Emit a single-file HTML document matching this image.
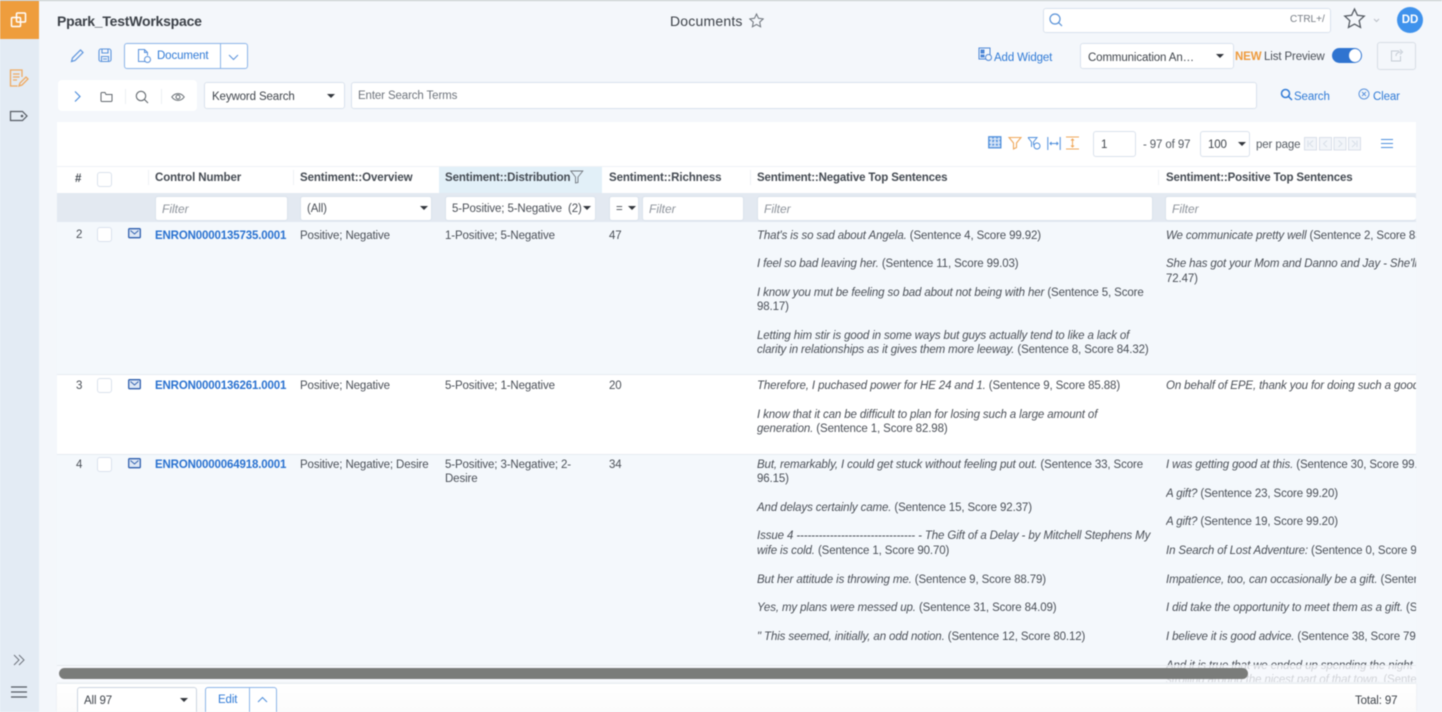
<!DOCTYPE html>
<html><head><meta charset="utf-8"><title>Documents</title>
<style>
html,body{margin:0;padding:0;width:1442px;height:712px;overflow:hidden;background:#f4f7fb}
body{font-family:"Liberation Sans",sans-serif;color:#4a4f57;font-size:11.5px;letter-spacing:-.12px;position:relative}
#r{position:absolute;left:0;top:0;width:1442px;height:712px;overflow:hidden;filter:blur(.4px)}
.a,.t,svg{position:absolute}
.t{white-space:nowrap;line-height:14px;margin-top:1px}
.h{font-weight:bold;font-size:11.5px;color:#444a52;letter-spacing:-.1px;margin-top:0}
.l{font-weight:bold;color:#2a72d0;font-size:11.5px;letter-spacing:-.15px;margin-top:0}
.i{font-style:italic}
.b{background:#fff;border:1px solid #dae2ec;border-radius:3px;box-sizing:border-box}
.f{font-style:italic;color:#8d939b;font-size:12px;letter-spacing:0;margin-top:0}
.tri{position:absolute;width:0;height:0;border-left:4px solid transparent;border-right:4px solid transparent;border-top:4.5px solid #33373d}
.cb{position:absolute;width:15px;height:15px;background:#fff;border:1px solid #dae2ec;border-radius:3px;box-sizing:border-box}
.blue{color:#2f7ad6}
</style></head><body><div id="r">
<div class="a" style="left:0;top:0;width:1442px;height:1px;background:#c4c8c9"></div>
<div class="a" style="left:0;top:1px;width:39px;height:711px;background:#e3ebf4"></div>
<div class="a" style="left:0;top:1px;width:39px;height:38px;background:#ee9d3d"></div>
<svg style="left:10px;top:11px" width="18" height="18" fill="none" stroke="#fff" stroke-width="1.5"><rect x="1.5" y="6.5" width="9" height="9" rx="1"/><rect x="6.5" y="2" width="9" height="9" rx="1"/></svg>
<svg style="left:9px;top:68px" width="20" height="20" fill="none" stroke="#efaa62" stroke-width="1.3"><path d="M13 9V2H1.5v16h7M4 6h6.500M4 9h6.500M4 12h4"/><path d="M10 18l1-3 6-6 2 2-6 6z"/></svg>
<svg style="left:9px;top:110px" width="20" height="12" fill="none" stroke="#555b63" stroke-width="1.200"><path d="M1.500 1.500h12l4.500 4.500-4.500 4.500h-12z"/><circle cx="13" cy="6" r=".7"/></svg>
<svg style="left:13px;top:654px" width="12" height="12" fill="none" stroke="#6f757d" stroke-width="1"><path d="M1 1l5 5-5 5M6 1l5 5-5 5"/></svg>
<svg style="left:11px;top:686px" width="17" height="12" stroke="#555b63" stroke-width="1.200"><path d="M0 1h16M0 6h16M0 11h16"/></svg>

<div class="t" style="left:57px;top:13px;margin-top:0;font-size:14px;line-height:16px;font-weight:bold;color:#3c4148;letter-spacing:-.22px">Ppark_TestWorkspace</div>
<div class="t" style="left:670px;top:13px;margin-top:0;font-size:14px;line-height:16px;color:#3c4148;letter-spacing:.2px">Documents</div>
<svg style="left:749px;top:13px" width="15" height="15" fill="none" stroke="#6e747c" stroke-width="1"><path d="M7.500 1l2 4.300 4.700.6-3.500 3.200.9 4.700-4.100-2.300-4.100 2.300.9-4.700L.8 5.900l4.700-.6z"/></svg>

<div class="b a" style="left:1043px;top:8px;width:288px;height:25px"></div>
<svg style="left:1048px;top:12px" width="16" height="16" fill="none" stroke="#5b93d8" stroke-width="1.200"><circle cx="7" cy="7" r="5"/><path d="M10.500 10.500L14 14"/></svg>
<div class="t" style="left:1290px;top:12px;font-size:10px;letter-spacing:0;color:#777d85">CTRL+/</div>
<svg style="left:1343px;top:7px" width="23" height="23" fill="none" stroke="#555b63" stroke-width="1.300"><path d="M11.500 2l2.900 6.300 6.800.8-5 4.600 1.300 6.700-6-3.300-6 3.300 1.300-6.700-5-4.600 6.800-.8z"/></svg>
<svg style="left:1373px;top:18px" width="7" height="5" fill="none" stroke="#b9bec5"><path d="M1 1l2.500 2.500L6 1"/></svg>
<div class="a" style="left:1397px;top:7px;width:26px;height:26px;border-radius:50%;background:#3f92ec;color:#fff;font-size:11.500px;letter-spacing:0;font-weight:bold;line-height:26px;text-align:center">DD</div>

<svg style="left:70px;top:48px" width="15" height="15" fill="none" stroke="#5b93dc" stroke-width="1.200"><path d="M1.500 13.500l1-3.500 8-8 2.500 2.500-8 8z"/></svg>
<svg style="left:98px;top:48px" width="14" height="15" fill="none" stroke="#5b93dc" stroke-width="1.100"><rect x="1" y="1" width="12" height="12.500" rx="2"/><path d="M4 1v4h6V1M3.500 13.500V8.500h7v5M5 11h4"/></svg>
<div class="a" style="left:124px;top:43px;width:124px;height:26px;background:#fff;border:1px solid #8db5e8;border-radius:3px;box-sizing:border-box"></div>
<div class="a" style="left:220px;top:43px;width:1px;height:26px;background:#8db5e8"></div>
<svg style="left:137px;top:48px" width="15" height="16" fill="none" stroke="#5b93dc" stroke-width="1"><path d="M8 13.500H1.500V1.500h6l3 3v3"/><path d="M7.500 1.500v3h3"/><circle cx="10.500" cy="11.500" r="3"/></svg>
<div class="t blue" style="left:157px;top:48px">Document</div>
<svg style="left:228px;top:54px" width="11" height="7" fill="none" stroke="#5b93dc" stroke-width="1"><path d="M1 1l4.500 4.500L10 1"/></svg>

<svg style="left:978px;top:47px" width="14" height="15" fill="none" stroke="#4c86d6" stroke-width="1"><rect x="1" y="1" width="11" height="11"/><rect x="3" y="3" width="3" height="3" fill="#4c86d6"/><rect x="3" y="8" width="3" height="2" fill="#4c86d6"/><circle cx="10.500" cy="10.500" r="3" fill="#f4f7fb"/></svg>
<div class="t blue" style="left:994px;top:50px">Add Widget</div>
<div class="b a" style="left:1080px;top:43px;width:154px;height:26px"></div>
<div class="t" style="left:1088px;top:50px;color:#3f444b">Communication An…</div>
<div class="tri" style="left:1216px;top:54px"></div>
<div class="t" style="left:1235px;top:49px;font-weight:bold;color:#ee9a3c">NEW</div>
<div class="t" style="left:1264px;top:49px;color:#4a4f57">List Preview</div>
<div class="a" style="left:1332px;top:48px;width:30px;height:15px;border-radius:8px;background:#2f74d0"></div>
<div class="a" style="left:1349px;top:49px;width:12px;height:13px;border-radius:50%;background:#fff"></div>
<div class="a" style="left:1377px;top:42px;width:39px;height:28px;border:1px solid #d8dee6;border-radius:3px;box-sizing:border-box"></div>
<svg style="left:1390px;top:48px" width="14" height="14" fill="none" stroke="#c5ccd5"><path d="M9 3H1.500v10h9V8M6 8c0-3 2-4 5-4M10 1.500L12.500 4 10 6.500"/></svg>

<div class="a" style="left:58px;top:80px;width:139px;height:31px;background:#fff;border-radius:4px"></div>
<svg style="left:73px;top:90px" width="9" height="13" fill="none" stroke="#4f8fdc" stroke-width="1.200"><path d="M2 1.500l5 5-5 5"/></svg>
<svg style="left:100px;top:91px" width="13" height="11" fill="none" stroke="#63696f"><path d="M1 2.500V9.500q0 1 1 1h9q1 0 1-1V3.500H6L5 1.500H2q-1 0-1 1z"/></svg>
<div class="a" style="left:125px;top:89px;width:1px;height:15px;background:#eceff3"></div>
<svg style="left:135px;top:90px" width="14" height="14" fill="none" stroke="#63696f" stroke-width="1.100"><circle cx="6" cy="6" r="4.700"/><path d="M9.500 9.500L13 13"/></svg>
<div class="a" style="left:161px;top:89px;width:1px;height:15px;background:#eceff3"></div>
<svg style="left:171px;top:92px" width="14" height="10" fill="none" stroke="#63696f"><path d="M.8 5C4 .5 10 .5 13.200 5 10 9.500 4 9.500.8 5z"/><circle cx="7" cy="5" r="2"/></svg>
<div class="b a" style="left:204px;top:82px;width:141px;height:27px"></div>
<div class="t" style="left:212px;top:89px;color:#3f444b">Keyword Search</div>
<div class="tri" style="left:327px;top:94px"></div>
<div class="b a" style="left:351px;top:82px;width:906px;height:27px"></div>
<div class="t" style="left:358px;top:88px;color:#6e747c">Enter Search Terms</div>
<svg style="left:1280px;top:88px" width="13" height="13" fill="none" stroke="#2f7ad6" stroke-width="1.500"><circle cx="5.500" cy="5.500" r="4"/><path d="M8.500 8.500L12 12"/></svg>
<div class="t blue" style="left:1294px;top:89px">Search</div>
<svg style="left:1358px;top:88px" width="12" height="12" fill="none" stroke="#5b93dc"><circle cx="6" cy="6" r="5"/><path d="M4 4l4 4M8 4l-4 4"/></svg>
<div class="t blue" style="left:1373px;top:89px">Clear</div>

<!-- table -->
<div class="a" style="left:57px;top:122px;width:1359px;height:560px;background:#fff;overflow:hidden">
  <div class="a" style="left:0;top:100px;width:1359px;height:153px;background:#f4f8fc;border-bottom:1px solid #e6ebf2;box-sizing:border-box"></div>
  <div class="a" style="left:0;top:332px;width:1359px;height:228px;background:#f4f8fc;border-top:1px solid #e6ebf2"></div>
  <div class="a" style="left:0;top:44px;width:1359px;height:1px;background:#eef2f6"></div>
  <div class="a" style="left:0;top:71px;width:1359px;height:29px;background:#e3e9f1"></div>
  <div class="a" style="left:382px;top:45px;width:163px;height:26px;background:#e2f0f8"></div>
</div>

<!-- toolbar icons -->
<svg style="left:988px;top:136px" width="14" height="13" fill="#d6e4f7" stroke="#4f8fdc" stroke-width="1.300"><rect x=".8" y=".8" width="12" height="11"/><path fill="none" d="M.8 4.500h12M.8 8.500h12M5 .8v11M9 .8v11" stroke-dasharray="2 1.500"/></svg>
<svg style="left:1008px;top:136px" width="14" height="14" fill="none" stroke="#efa75a" stroke-width="1.100"><path d="M1 1.500h12l-4.500 5.500v4.500l-3 1.500V7z"/></svg>
<svg style="left:1027px;top:136px" width="14" height="14" fill="none" stroke="#4f8fdc" stroke-width="1"><path d="M1 1.500h9L6.500 6v3"/><path d="M1 1.500L4.500 6v5"/><circle cx="10" cy="10" r="3"/></svg>
<svg style="left:1047px;top:137px" width="14" height="13" fill="none" stroke="#4f8fdc"><path d="M.8 0v13M13.200 0v13M3 6.500h8M4.500 5L3 6.500 4.500 8M9.500 5L11 6.500 9.500 8"/></svg>
<svg style="left:1066px;top:136px" width="13" height="14" fill="none" stroke="#efa75a"><path d="M0 1h13M0 13h13M6.500 3v8M5 4.500L6.500 3 8 4.500M5 9.500L6.500 11 8 9.500"/></svg>
<div class="b a" style="left:1093px;top:131px;width:43px;height:26px"></div>
<div class="t" style="left:1101px;top:137px;color:#3f444b">1</div>
<div class="t" style="left:1143px;top:137px;color:#555b63">- 97 of 97</div>
<div class="b a" style="left:1200px;top:131px;width:50px;height:26px"></div>
<div class="t" style="left:1208px;top:137px;color:#3f444b">100</div>
<div class="tri" style="left:1238px;top:142px"></div>
<div class="t" style="left:1256px;top:137px;color:#555b63">per page</div>
<svg style="left:1304px;top:137px" width="58" height="14" fill="#f2f5f9" stroke="#d6dde7" stroke-width=".9"><rect x=".5" y=".5" width="12" height="12.500"/><rect x="15.500" y=".5" width="12" height="12.500"/><rect x="30" y=".5" width="12" height="12.500"/><rect x="44.500" y=".5" width="12" height="12.500"/><path fill="none" d="M4 3.500v6.500M9 3.500L5.500 6.800 9 10M23 3.500L19.500 6.800 23 10M34.500 3.500L38 6.800 34.500 10M48 3.500l3.500 3.300L48 10M53 3.500v6.500"/></svg>
<svg style="left:1381px;top:138px" width="12" height="11" stroke="#4f8fdc" stroke-width="1.100"><path d="M0 1.500h12M0 5.500h12M0 9.500h12"/></svg>

<!-- header -->
<div class="t h" style="left:75px;top:172px">#</div>
<div class="cb" style="left:97px;top:172px"></div>
<div class="a" style="left:148px;top:170px;width:1px;height:15px;background:#eef1f5"></div>
<div class="t h" style="left:155px;top:171px">Control Number</div>
<div class="a" style="left:293px;top:170px;width:1px;height:15px;background:#eef1f5"></div>
<div class="t h" style="left:300px;top:171px">Sentiment::Overview</div>
<div class="t h" style="left:445px;top:171px">Sentiment::Distribution</div>
<svg style="left:570px;top:170px" width="14" height="14" fill="none" stroke="#737980" stroke-width=".9"><path d="M.8 1h12L8 7v5.500L5.500 13V7z"/></svg>
<div class="t h" style="left:609px;top:171px">Sentiment::Richness</div>
<div class="a" style="left:750px;top:170px;width:1px;height:15px;background:#eef1f5"></div>
<div class="t h" style="left:757px;top:171px;letter-spacing:-.15px">Sentiment::Negative Top Sentences</div>
<div class="a" style="left:1158px;top:170px;width:1px;height:15px;background:#eef1f5"></div>
<div class="t h" style="left:1166px;top:171px;letter-spacing:-.15px">Sentiment::Positive Top Sentences</div>

<!-- filters -->
<div class="b a" style="left:155px;top:196px;width:133px;height:25px"></div><div class="t f" style="left:162px;top:202px">Filter</div>
<div class="b a" style="left:300px;top:196px;width:132px;height:25px"></div><div class="t" style="left:307px;top:201px">(All)</div><div class="tri" style="left:420px;top:206px"></div>
<div class="b a" style="left:445px;top:196px;width:151px;height:25px"></div><div class="t" style="left:452px;top:201px">5-Positive; 5-Negative&nbsp; (2)</div><div class="tri" style="left:583px;top:206px"></div>
<div class="b a" style="left:609px;top:196px;width:30px;height:25px"></div><div class="t" style="left:616px;top:201px">=</div><div class="tri" style="left:628px;top:206px"></div>
<div class="b a" style="left:642px;top:196px;width:102px;height:25px"></div><div class="t f" style="left:649px;top:202px">Filter</div>
<div class="b a" style="left:757px;top:196px;width:396px;height:25px"></div><div class="t f" style="left:764px;top:202px">Filter</div>
<div class="b a" style="left:1165px;top:196px;width:251px;height:25px;border-right:0"></div><div class="t f" style="left:1172px;top:202px">Filter</div>

<!-- row 2 -->
<div class="t" style="left:76px;top:227px">2</div><div class="cb" style="left:97px;top:227px"></div>
<svg style="left:128px;top:228px" width="13" height="11" fill="#dfe8f5" stroke="#2f5fae" stroke-width="1.300"><rect x=".7" y=".7" width="11.600" height="9" rx="1"/><path fill="none" stroke-width=".9" d="M2.500 2.500L6.500 6l4-3.500"/></svg>
<div class="t l" style="left:155px;top:229px">ENRON0000135735.0001</div>
<div class="t" style="left:300px;top:228px">Positive; Negative</div>
<div class="t" style="left:445px;top:228px">1-Positive; 5-Negative</div>
<div class="t" style="left:609px;top:228px">47</div>
<div class="t" style="left:757px;top:228px"><i>That's is so sad about Angela.</i> (Sentence 4, Score 99.92)</div>
<div class="t" style="left:757px;top:256px"><i>I feel so bad leaving her.</i> (Sentence 11, Score 99.03)</div>
<div class="t" style="left:757px;top:285px"><i>I know you mut be feeling so bad about not being with her</i> (Sentence 5, Score</div>
<div class="t" style="left:757px;top:299px">98.17)</div>
<div class="t" style="left:757px;top:328px"><i>Letting him stir is good in some ways but guys actually tend to like a lack of</i></div>
<div class="t" style="left:757px;top:342px"><i>clarity in relationships as it gives them more leeway.</i> (Sentence 8, Score 84.32)</div>

<!-- row 3 -->
<div class="t" style="left:76px;top:378px">3</div><div class="cb" style="left:97px;top:378px"></div>
<svg style="left:128px;top:379px" width="13" height="11" fill="#dfe8f5" stroke="#2f5fae" stroke-width="1.300"><rect x=".7" y=".7" width="11.600" height="9" rx="1"/><path fill="none" stroke-width=".9" d="M2.500 2.500L6.500 6l4-3.500"/></svg>
<div class="t l" style="left:155px;top:379px">ENRON0000136261.0001</div>
<div class="t" style="left:300px;top:378px">Positive; Negative</div>
<div class="t" style="left:445px;top:378px">5-Positive; 1-Negative</div>
<div class="t" style="left:609px;top:378px">20</div>
<div class="t" style="left:757px;top:378px"><i>Therefore, I puchased power for HE 24 and 1.</i> (Sentence 9, Score 85.88)</div>
<div class="t" style="left:757px;top:407px"><i>I know that it can be difficult to plan for losing such a large amount of</i></div>
<div class="t" style="left:757px;top:421px"><i>generation.</i> (Sentence 1, Score 82.98)</div>

<!-- row 4 -->
<div class="t" style="left:76px;top:457px">4</div><div class="cb" style="left:97px;top:457px"></div>
<svg style="left:128px;top:458px" width="13" height="11" fill="#dfe8f5" stroke="#2f5fae" stroke-width="1.300"><rect x=".7" y=".7" width="11.600" height="9" rx="1"/><path fill="none" stroke-width=".9" d="M2.500 2.500L6.500 6l4-3.500"/></svg>
<div class="t l" style="left:155px;top:458px">ENRON0000064918.0001</div>
<div class="t" style="left:300px;top:457px">Positive; Negative; Desire</div>
<div class="t" style="left:445px;top:457px">5-Positive; 3-Negative; 2-</div>
<div class="t" style="left:445px;top:471px">Desire</div>
<div class="t" style="left:609px;top:457px">34</div>
<div class="t" style="left:757px;top:457px"><i>But, remarkably, I could get stuck without feeling put out.</i> (Sentence 33, Score</div>
<div class="t" style="left:757px;top:471px">96.15)</div>
<div class="t" style="left:757px;top:500px"><i>And delays certainly came.</i> (Sentence 15, Score 92.37)</div>
<div class="t" style="left:757px;top:528px"><i>Issue 4 -------------------------------- - The Gift of a Delay - by Mitchell Stephens My</i></div>
<div class="t" style="left:757px;top:543px"><i>wife is cold.</i> (Sentence 1, Score 90.70)</div>
<div class="t" style="left:757px;top:572px"><i>But her attitude is throwing me.</i> (Sentence 9, Score 88.79)</div>
<div class="t" style="left:757px;top:600px"><i>Yes, my plans were messed up.</i> (Sentence 31, Score 84.09)</div>
<div class="t" style="left:757px;top:629px"><i>" This seemed, initially, an odd notion.</i> (Sentence 12, Score 80.12)</div>

<!-- positive column, clipped -->
<div class="a" style="left:1166px;top:222px;width:250px;height:460px;overflow:hidden">
<div class="t" style="left:0;top:6px"><i>We communicate pretty well</i> (Sentence 2, Score 83.10)</div>
<div class="t" style="left:0;top:34px"><i>She has got your Mom and Danno and Jay - She'll be fine</i></div>
<div class="t" style="left:0;top:49px">72.47)</div>
<div class="t" style="left:0;top:156px"><i>On behalf of EPE, thank you for doing such a good job</i></div>
<div class="t" style="left:0;top:235px"><i>I was getting good at this.</i> (Sentence 30, Score 99.50)</div>
<div class="t" style="left:0;top:264px"><i>A gift?</i> (Sentence 23, Score 99.20)</div>
<div class="t" style="left:0;top:292px"><i>A gift?</i> (Sentence 19, Score 99.20)</div>
<div class="t" style="left:0;top:321px"><i>In Search of Lost Adventure:</i> (Sentence 0, Score 98.10)</div>
<div class="t" style="left:0;top:350px"><i>Impatience, too, can occasionally be a gift.</i> (Sentence 5)</div>
<div class="t" style="left:0;top:378px"><i>I did take the opportunity to meet them as a gift.</i> (Sentence)</div>
<div class="t" style="left:0;top:407px"><i>I believe it is good advice.</i> (Sentence 38, Score 79.20)</div>
<div class="t" style="left:0;top:436px"><i>And it is true that we ended up spending the night at</i></div>
<div class="t" style="left:0;top:450px"><i>strolling around the nicest part of that town.</i> (Sentence 7)</div>
</div>

<!-- scrollbar -->
<div class="a" style="left:57px;top:665px;width:1359px;height:17px;background:rgba(247,249,252,.78);border-top:1px solid #e6e9ed;box-sizing:border-box"></div>
<div class="a" style="left:59px;top:668px;width:1189px;height:11px;border-radius:6px;background:#7a7c7a"></div>

<!-- footer -->
<div class="a" style="left:57px;top:684px;width:1359px;height:28px;background:linear-gradient(#fff,#fbfbfb);box-shadow:0 -1px 2px rgba(120,130,140,.12)"></div>
<div class="a" style="left:77px;top:687px;width:120px;height:30px;background:#fff;border:1px solid #ccd5e1;border-radius:3px;box-sizing:border-box"></div>
<div class="t" style="left:84px;top:693px;color:#3f444b">All 97</div>
<div class="tri" style="left:180px;top:698px"></div>
<div class="a" style="left:205px;top:687px;width:72px;height:30px;background:#fff;border:1px solid #8db5e8;border-radius:3px;box-sizing:border-box"></div>
<div class="a" style="left:249px;top:687px;width:1px;height:30px;background:#8db5e8"></div>
<div class="t blue" style="left:218px;top:692px">Edit</div>
<svg style="left:257px;top:696px" width="11" height="7" fill="none" stroke="#4f8fdc" stroke-width="1"><path d="M1 6l4.500-4.500L10 6"/></svg>
<div class="t" style="left:1355px;top:693px;color:#3f444b">Total: 97</div>
</div></body></html>
